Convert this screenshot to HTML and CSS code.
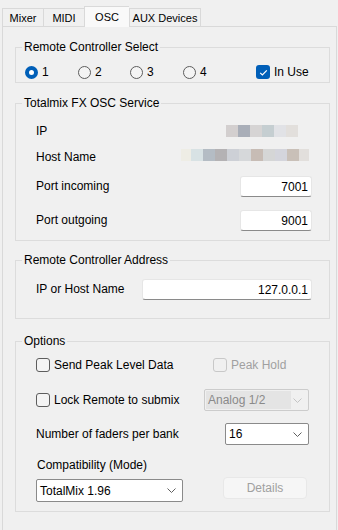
FILE: index.html
```html
<!DOCTYPE html>
<html lang="en">
<head>
    <meta charset="UTF-8">
    <title>OSC Settings</title>
    <link rel="stylesheet" href="styles.css">
</head>
<body>
    <div class="tabs">
        <div class="tab tab-mixer">Mixer</div>
        <div class="tab tab-midi">MIDI</div>
        <div class="tab tab-osc active">OSC</div>
        <div class="tab tab-aux">AUX Devices</div>
    </div>

    <div class="panel">
        <!-- Remote controller select -->
        <fieldset class="group group-select">
            <legend>Remote Controller Select</legend>
            <div class="group-body radio-row">
                <label class="option opt-1"><span class="radio checked"></span>1</label>
                <label class="option opt-2"><span class="radio"></span>2</label>
                <label class="option opt-3"><span class="radio"></span>3</label>
                <label class="option opt-4"><span class="radio"></span>4</label>
                <label class="option"><span class="check checked">
                    <svg width="13" height="13" viewBox="0 0 13 13"><polyline points="3.2,6.8 5.4,9 9.8,4.4" fill="none" stroke="#fff" stroke-width="1.2"/></svg>
                </span>In Use</label>
            </div>
        </fieldset>

        <!-- OSC service -->
        <fieldset class="group group-service">
            <legend>Totalmix FX OSC Service</legend>
            <div class="group-body">
                <div class="row row-ip">
                    <span>IP</span>
                    <span class="blur blur-ip">
                        <i style="background:#d3cfcf"></i><i style="background:#a9aeb8"></i><i style="background:#d6d4d4"></i><i style="background:#c5ced1"></i><i style="background:#e1e2e6"></i><i style="background:#e2dfdc"></i>
                    </span>
                </div>
                <div class="row row-host">
                    <span>Host Name</span>
                    <span class="blur blur-host">
                        <i class="narrow" style="background:#eeede5"></i><i style="background:#d8e2e4"></i><i style="background:#b4bcc4"></i><i style="background:#b4b2b4"></i><i style="background:#cdd0d6"></i><i style="background:#d6d8da"></i><i style="background:#c7bcb5"></i><i style="background:#d5d6d6"></i><i style="background:#d4d5dc"></i><i style="background:#c9c0b8"></i><i class="narrow" style="background:#e2dfdc"></i>
                    </span>
                </div>
                <div class="row row-in">
                    <span>Port incoming</span>
                    <div class="textbox port">7001</div>
                </div>
                <div class="row row-out">
                    <span>Port outgoing</span>
                    <div class="textbox port">9001</div>
                </div>
            </div>
        </fieldset>

        <!-- Remote address -->
        <fieldset class="group group-address">
            <legend>Remote Controller Address</legend>
            <div class="group-body">
                <div class="row">
                    <span>IP or Host Name</span>
                    <div class="textbox host">127.0.0.1</div>
                </div>
            </div>
        </fieldset>

        <!-- Options -->
        <fieldset class="group group-options">
            <legend>Options</legend>
            <div class="group-body">
                <div class="row row-peak">
                    <label class="option col-peak"><span class="check"></span>Send Peak Level Data</label>
                    <label class="option disabled"><span class="check"></span>Peak Hold</label>
                </div>
                <div class="row row-lock">
                    <label class="option col-lock"><span class="check"></span>Lock Remote to submix</label>
                    <div class="select select-disabled">
                        <span class="sel-fill">Analog 1/2</span>
                        <svg width="9" height="5" viewBox="0 0 9 5"><polyline points="0.5,0.5 4.5,4.5 8.5,0.5" fill="none" stroke="#c4c4c4"/></svg>
                    </div>
                </div>
                <div class="row row-faders">
                    <span class="col-faders">Number of faders per bank</span>
                    <div class="select select-faders">
                        <span>16</span>
                        <svg width="9" height="5" viewBox="0 0 9 5"><polyline points="0.5,0.5 4.5,4.5 8.5,0.5" fill="none" stroke="#5f5f5f"/></svg>
                    </div>
                </div>
                <div class="row row-compat-label">
                    <span>Compatibility (Mode)</span>
                </div>
                <div class="row row-compat">
                    <div class="select select-mode">
                        <span>TotalMix 1.96</span>
                        <svg width="9" height="5" viewBox="0 0 9 5"><polyline points="0.5,0.5 4.5,4.5 8.5,0.5" fill="none" stroke="#5f5f5f"/></svg>
                    </div>
                    <button class="btn" disabled>Details</button>
                </div>
            </div>
        </fieldset>
    </div>
</body>
</html>
```

FILE: styles.css
```css
html, body {
    margin: 0;
    padding: 0;
    width: 338px;
    height: 530px;
    overflow: hidden;
    background-color: #f0f0f0;
    font-family: "Liberation Sans", Arial, sans-serif;
    font-size: 12px;
    line-height: 14px;
    color: #000;
}

/* tab strip */
.tabs {
    display: flex;
    align-items: flex-end;
    height: 26px;
    margin: 0 1px 0 2px;
    border-bottom: 1px solid #d9d9d9;
}

.tab {
    box-sizing: border-box;
    height: 18px;
    padding-top: 3px;
    font-size: 11px;
    line-height: 13px;
    text-align: center;
    border-top: 1px solid #d9d9d9;
    border-left: 1px solid #d9d9d9;
    background-color: #f0f0f0;
}

.tab-mixer { width: 41px; }
.tab-midi { width: 41px; }
.tab-osc { width: 45px; }
.tab-aux { width: 72px; border-right: 1px solid #d9d9d9; }

    .tab.active {
        height: 21px;
        margin-bottom: -1px;
        padding-top: 4px;
        background-color: #f9f9f9;
    }

.panel {
    margin: 0 1px 0 2px;
    height: 510px;
    border-left: 1px solid #d9d9d9;
    border-right: 1px solid #d9d9d9;
    padding-top: 13px;
}

/* group boxes */
.group {
    margin: 0 6px 0 12px;
    padding: 0;
    border: 1px solid #dcdcdc;
    min-width: 0;
}

    .group legend {
        margin-left: 6px;
        padding: 0 2px;
        line-height: 14px;
    }

.group-body {
    padding: 0 17px 0 20px;
}

.group-select .group-body { padding: 10px 0 2px 9px; }
.group-service { margin-top: 13px; }
.group-service .group-body { padding-top: 10px; padding-bottom: 9px; }
.group-address { margin-top: 12px; }
.group-address .group-body { padding-top: 11px; padding-bottom: 18px; }
.group-options { margin-top: 15px; }
.group-options .group-body { padding-top: 6px; padding-bottom: 9px; }

/* radios and checkboxes */
.radio-row {
    display: flex;
    align-items: center;
    height: 16px;
}

.option {
    display: flex;
    align-items: center;
    gap: 4px;
}

.opt-1 { width: 53px; }
.opt-2 { width: 52px; }
.opt-3 { width: 53px; }
.opt-4 { width: 73px; }

.radio {
    box-sizing: border-box;
    width: 13px;
    height: 13px;
    border-radius: 50%;
    border: 1px solid #5d5d5d;
    background-color: #f4f4f4;
}

    .radio.checked {
        border: 4px solid #005fb8;
        background-color: #fff;
    }

.check {
    box-sizing: border-box;
    display: flex;
    width: 14px;
    height: 14px;
    border-radius: 3px;
    border: 1px solid #5d5d5d;
    background-color: #f4f4f4;
}

    .check.checked {
        border: none;
        background-color: #005fb8;
    }

    .check svg {
        margin: 0.5px;
    }

.option.disabled {
    color: #a0a0a0;
}

    .option.disabled .check {
        border-color: #c8c8c8;
        background-color: #f0f0f0;
    }

/* rows */
.row {
    display: flex;
    align-items: center;
    height: 22px;
}

.row-host { margin-top: 4px; }
.row-in { margin-top: 7px; }
.row-out { margin-top: 12px; }
.row-lock { margin-top: 13px; }
.row-faders { margin-top: 12px; }
.row-compat-label { margin-top: 12px; height: 16px; padding-left: 1px; }
.row-compat { margin-top: 4px; height: 25px; align-items: flex-start; }

.blur {
    display: flex;
    margin-left: auto;
}

    .blur i {
        display: block;
        width: 12px;
        height: 12px;
    }

.blur-ip { margin-right: 14px; }
.blur-host { margin-right: 3px; margin-top: -4px; }

    .blur-host i.narrow {
        width: 10px;
    }

.textbox {
    box-sizing: border-box;
    height: 21px;
    margin-left: auto;
    padding: 3px 3px 0 0;
    text-align: right;
    background-color: #fff;
    border: 1px solid #e6e6e6;
    border-bottom-color: #8a8a8a;
    border-radius: 3px;
}

.port { width: 72px; }
.host { width: 170px; }

.col-peak { width: 177px; }
.col-lock { width: 168px; }
.col-faders { width: 189px; }

/* dropdowns */
.select {
    box-sizing: border-box;
    display: flex;
    align-items: center;
    justify-content: space-between;
    height: 22px;
    padding: 0 6px 0 3px;
    background-color: #fff;
    border: 1px solid #8a8a8a;
    border-radius: 2px;
}

.select-disabled {
    width: 105px;
    padding: 1px 6px 1px 1px;
    align-items: stretch;
    border-color: #cccccc;
    background-color: #f0f0f0;
    color: #8a8a8a;
}

    .select-disabled svg {
        align-self: center;
    }

.sel-fill {
    display: flex;
    align-items: center;
    width: 83px;
    padding-left: 2px;
    background-color: #e4e4e4;
}

.select-faders { width: 84px; }

.select-mode {
    width: 147px;
    height: 23px;
    margin-top: 2px;
}

.btn {
    box-sizing: border-box;
    width: 84px;
    height: 22px;
    margin-left: 40px;
    padding: 0;
    font-family: inherit;
    font-size: 12px;
    color: #a0a0a0;
    background-color: #f6f6f6;
    border: 1px solid #e8e8e8;
    border-radius: 4px;
}
```
